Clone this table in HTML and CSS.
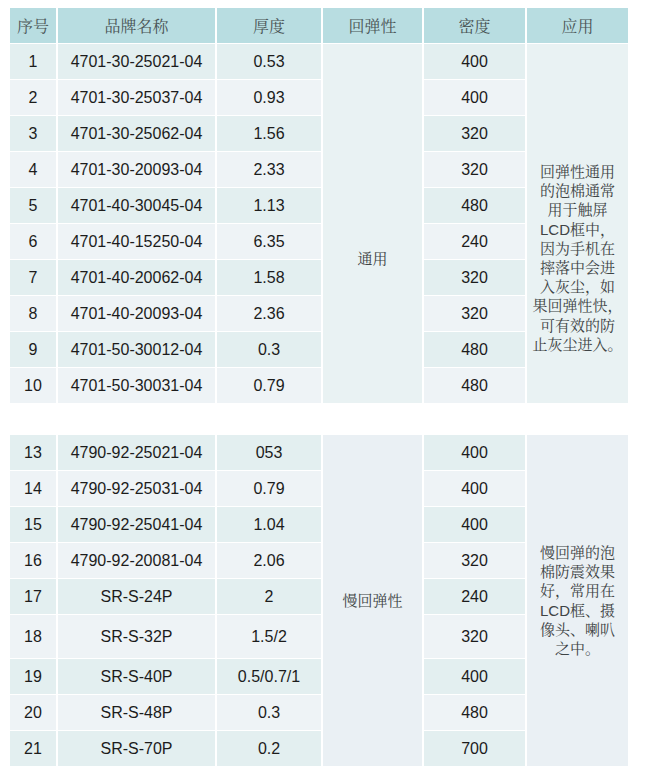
FILE: index.html
```html
<!DOCTYPE html>
<html lang="zh">
<head>
<meta charset="utf-8">
<title>泡棉型号表</title>
<link rel="stylesheet" href="styles.css">
</head>
<body>
<table class="spec spec-first">
  <colgroup>
    <col class="c-no"><col class="c-name"><col class="c-thick"><col class="c-rebound"><col class="c-density"><col class="c-use">
  </colgroup>
  <thead>
    <tr class="head"><th>序号</th><th>品牌名称</th><th>厚度</th><th>回弹性</th><th>密度</th><th>应用</th></tr>
  </thead>
  <tbody>
    <tr class="odd"><td>1</td><td>4701-30-25021-04</td><td>0.53</td>
      <td class="merged merged-shift" rowspan="10">通用</td>
      <td>400</td>
      <td class="merged merged-shift note" rowspan="10">回弹性通用<br>的泡棉通常<br>用于触屏<br>LCD框中，<br>因为手机在<br>摔落中会进<br>入灰尘，如<br>果回弹性快，<br>可有效的防<br>止灰尘进入。</td></tr>
    <tr class="even"><td>2</td><td>4701-30-25037-04</td><td>0.93</td><td>400</td></tr>
    <tr class="odd"><td>3</td><td>4701-30-25062-04</td><td>1.56</td><td>320</td></tr>
    <tr class="even"><td>4</td><td>4701-30-20093-04</td><td>2.33</td><td>320</td></tr>
    <tr class="odd"><td>5</td><td>4701-40-30045-04</td><td>1.13</td><td>480</td></tr>
    <tr class="even"><td>6</td><td>4701-40-15250-04</td><td>6.35</td><td>240</td></tr>
    <tr class="odd"><td>7</td><td>4701-40-20062-04</td><td>1.58</td><td>320</td></tr>
    <tr class="even"><td>8</td><td>4701-40-20093-04</td><td>2.36</td><td>320</td></tr>
    <tr class="odd"><td>9</td><td>4701-50-30012-04</td><td>0.3</td><td>480</td></tr>
    <tr class="even"><td>10</td><td>4701-50-30031-04</td><td>0.79</td><td>480</td></tr>
  </tbody>
</table>

<table class="spec spec-second">
  <colgroup>
    <col class="c-no"><col class="c-name"><col class="c-thick"><col class="c-rebound"><col class="c-density"><col class="c-use">
  </colgroup>
  <tbody>
    <tr class="odd"><td>13</td><td>4790-92-25021-04</td><td>053</td>
      <td class="merged merged-blue" rowspan="9">慢回弹性</td>
      <td>400</td>
      <td class="merged merged-blue note" rowspan="9">慢回弹的泡<br>棉防震效果<br>好，常用在<br>LCD框、摄<br>像头、喇叭<br>之中。</td></tr>
    <tr class="even"><td>14</td><td>4790-92-25031-04</td><td>0.79</td><td>400</td></tr>
    <tr class="odd"><td>15</td><td>4790-92-25041-04</td><td>1.04</td><td>400</td></tr>
    <tr class="even"><td>16</td><td>4790-92-20081-04</td><td>2.06</td><td>320</td></tr>
    <tr class="odd"><td>17</td><td>SR-S-24P</td><td>2</td><td>240</td></tr>
    <tr class="even tall"><td>18</td><td>SR-S-32P</td><td>1.5/2</td><td>320</td></tr>
    <tr class="odd"><td>19</td><td>SR-S-40P</td><td>0.5/0.7/1</td><td>400</td></tr>
    <tr class="even"><td>20</td><td>SR-S-48P</td><td>0.3</td><td>480</td></tr>
    <tr class="odd"><td>21</td><td>SR-S-70P</td><td>0.2</td><td>700</td></tr>
  </tbody>
</table>
</body>
</html>
```

FILE: styles.css
```css
html, body {
  background: #ffffff;
}

body {
  margin: 7px 8px 0 8px;
  font-family: "Liberation Sans", Arial, "Noto Sans CJK SC", sans-serif;
  color: #1c1c1c;
}

.spec {
  border-collapse: separate;
  border-spacing: 2px 1px;
  table-layout: fixed;
  width: 622px;
}

.spec-second {
  margin-top: 30px;
}

.c-no { width: 46px; }
.c-name { width: 157px; }
.c-thick { width: 104px; }
.c-rebound { width: 99px; }
.c-density { width: 101px; }
.c-use { width: 101px; }

.spec th,
.spec td {
  padding: 0;
  text-align: center;
  vertical-align: middle;
  height: 35px;
}

.spec td {
  font-size: 16px;
  line-height: 19px;
}

.head th {
  background: #b8dde1;
  font-family: "Noto Serif CJK SC", "Noto Sans CJK SC", serif;
  font-weight: normal;
  font-size: 16px;
  color: #4a5556;
}

.odd td {
  background: #e3eff0;
}

.even td {
  background: #eef3f6;
}

.tall td {
  height: 43px;
}

.spec td.merged {
  background: #e9f2f3;
  font-family: "Liberation Sans", "Noto Serif CJK SC", "Noto Sans CJK SC", sans-serif;
  font-size: 15px;
  color: #3e4445;
}

.spec td.merged-shift {
  padding-top: 69px;
}

.spec td.merged-blue {
  background: #eaf0f4;
}

.spec td.note {
  line-height: 19.2px;
  white-space: nowrap;
}
```
